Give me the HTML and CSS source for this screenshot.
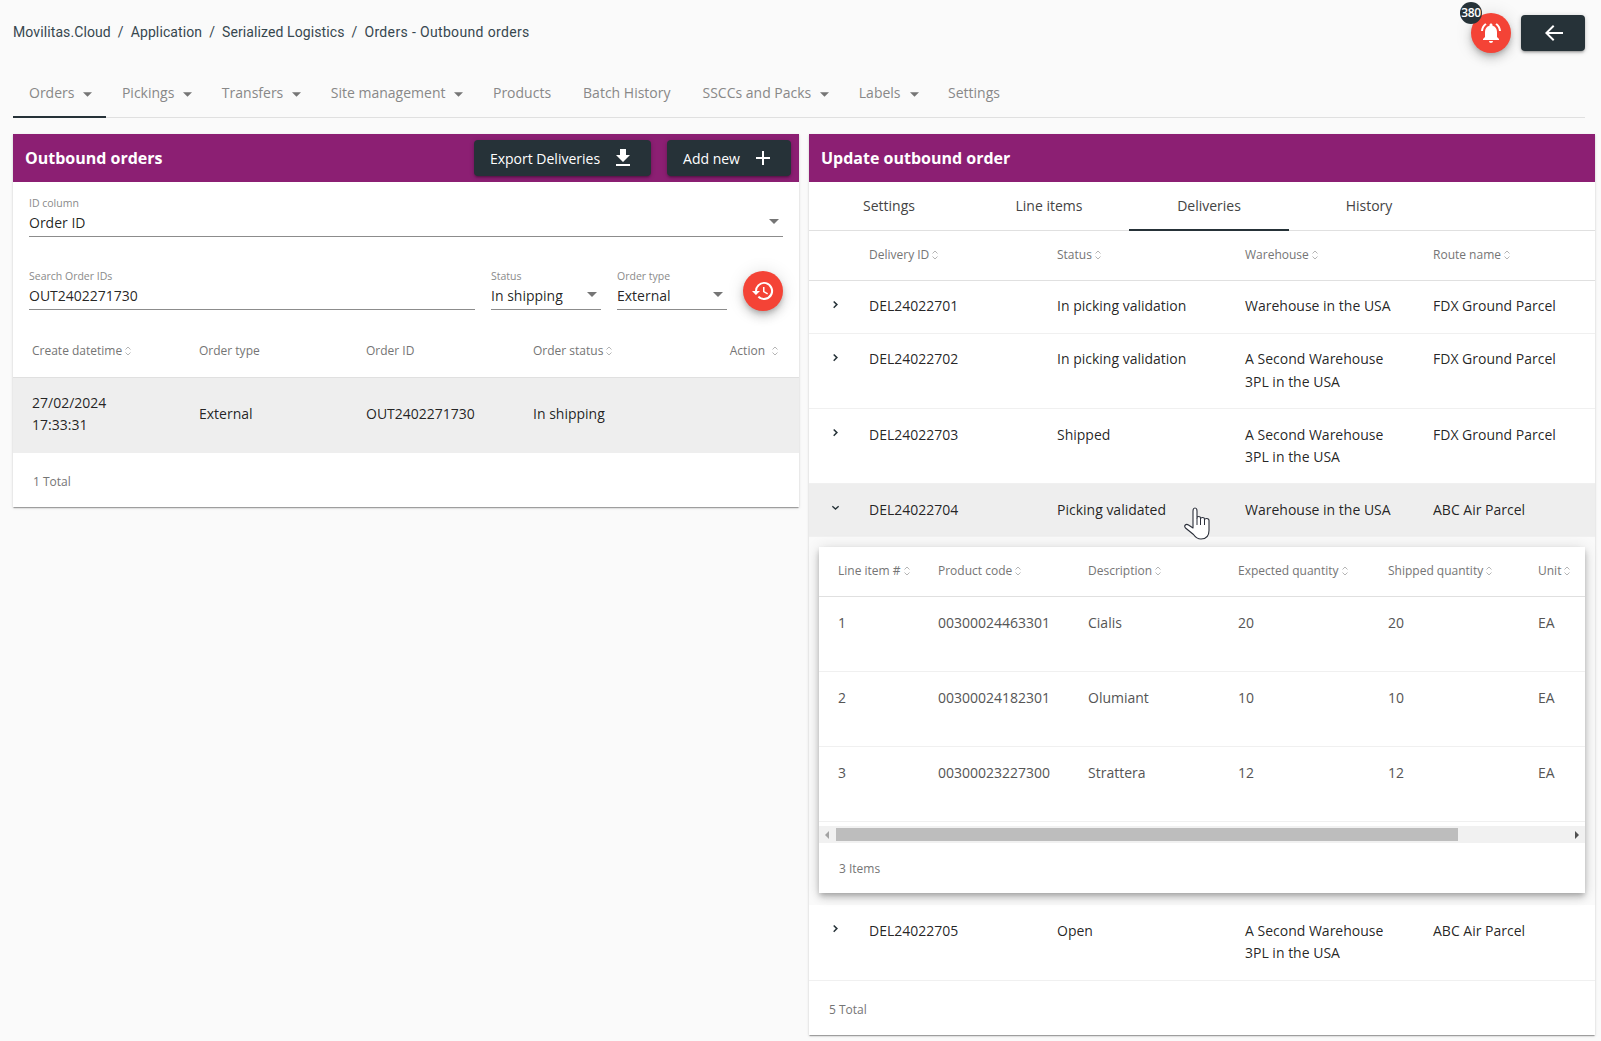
FILE: index.html
```html
<!DOCTYPE html>
<html lang="en">
<head>
    <meta charset="UTF-8">
    <title>Orders - Outbound orders</title>
    <link rel="stylesheet" href="styles.css">
</head>
<body>
    <svg class="defs" width="0" height="0">
        <symbol id="sort" viewBox="0 0 8 12">
            <path d="M1.5 4.5 4 2l2.5 2.5M1.5 7.5 4 10l2.5-2.5" fill="none" stroke="#b5b5b5" stroke-width="1"/>
        </symbol>
        <symbol id="caret" viewBox="0 0 10 5">
            <path d="M0 0h10L5 5z" fill="currentColor"/>
        </symbol>
        <symbol id="chev-right" viewBox="0 0 8 10">
            <path d="M2.2 1.5 5.4 4.6 2.2 7.7" fill="none" stroke="#263238" stroke-width="1.5"/>
        </symbol>
        <symbol id="chev-down" viewBox="0 0 10 8">
            <path d="M1.5 2 5 5.2 8.5 2" fill="none" stroke="#263238" stroke-width="1.5"/>
        </symbol>
    </svg>

    <!-- Top bar -->
    <header class="topbar">
        <nav class="breadcrumb">
            <a>Movilitas.Cloud</a><span>/</span><a>Application</a><span>/</span><a>Serialized Logistics</a><span>/</span><a class="crumb-current">Orders - Outbound orders</a>
        </nav>
        <div class="top-actions">
            <button class="fab fab-bell">
                <span class="badge">380</span>
                <svg width="24" height="24" viewBox="0 0 24 24" fill="#fff"><path d="M12 22c1.2 0 2-.9 2-2h-4c0 1.100.8 2 2 2zm6-6v-5c0-3.100-1.600-5.600-4.500-6.300V4c0-.8-.7-1.500-1.500-1.500s-1.500.7-1.500 1.500v.7C7.600 5.400 6 7.900 6 11v5l-2 2v1h16v-1l-2-2zM7.600 3.600 6.200 2.200C3.800 4 2.200 6.800 2 10h2c.2-2.700 1.500-5 3.600-6.400zM20 10h2c-.2-3.200-1.800-6-4.200-7.800l-1.400 1.400C18.500 5 19.800 7.300 20 10z"/></svg>
            </button>
            <button class="btn btn-back">
                <svg width="24" height="24" viewBox="0 0 24 24" fill="#fff"><path d="M22 11H7.800l5.600-5.600L12 4l-8 8 8 8 1.400-1.400L7.800 13H22z"/></svg>
            </button>
        </div>
    </header>

    <!-- Main tabs -->
    <nav class="main-tabs">
        <a class="main-tab active">Orders<svg class="tab-caret"><use href="#caret"/></svg></a>
        <a class="main-tab">Pickings<svg class="tab-caret"><use href="#caret"/></svg></a>
        <a class="main-tab">Transfers<svg class="tab-caret"><use href="#caret"/></svg></a>
        <a class="main-tab">Site management<svg class="tab-caret"><use href="#caret"/></svg></a>
        <a class="main-tab">Products</a>
        <a class="main-tab">Batch History</a>
        <a class="main-tab">SSCCs and Packs<svg class="tab-caret"><use href="#caret"/></svg></a>
        <a class="main-tab">Labels<svg class="tab-caret"><use href="#caret"/></svg></a>
        <a class="main-tab">Settings</a>
    </nav>

    <main class="panels">
        <!-- Outbound orders -->
        <section class="card">
            <div class="card-header">
                <h2>Outbound orders</h2>
                <div class="header-actions">
                    <button class="btn btn-export">Export Deliveries
                        <svg width="24" height="24" viewBox="0 0 24 24" fill="#fff"><path d="M19 9h-4V3H9v6H5l7 7 7-7zM5 18v2h14v-2H5z"/></svg>
                    </button>
                    <button class="btn btn-add">Add new
                        <svg width="24" height="24" viewBox="0 0 24 24" fill="#fff"><path d="M19 13h-6v6h-2v-6H5v-2h6V5h2v6h6v2z"/></svg>
                    </button>
                </div>
            </div>
            <div class="filters">
                <div class="field">
                    <label>ID column</label>
                    <div class="field-value">Order ID<svg class="select-caret"><use href="#caret"/></svg></div>
                </div>
                <div class="filter-row">
                    <div class="field field-grow">
                        <label>Search Order IDs</label>
                        <div class="field-value">OUT2402271730</div>
                    </div>
                    <div class="field field-small">
                        <label>Status</label>
                        <div class="field-value">In shipping<svg class="select-caret"><use href="#caret"/></svg></div>
                    </div>
                    <div class="field field-small">
                        <label>Order type</label>
                        <div class="field-value">External<svg class="select-caret"><use href="#caret"/></svg></div>
                    </div>
                    <button class="fab fab-reset">
                        <svg width="24" height="24" viewBox="0 0 24 24" fill="#fff"><path d="M13 3a9 9 0 0 0-9 9H1l3.900 3.900.1.100L9 12H6a7 7 0 1 1 2.100 4.900l-1.400 1.400A9 9 0 1 0 13 3zm-1 5v5l4.300 2.500.7-1.200-3.500-2.100V8H12z"/></svg>
                    </button>
                </div>
            </div>
            <table class="data-table orders-table">
                <thead>
                    <tr>
                        <th>Create datetime<svg class="sort"><use href="#sort"/></svg></th>
                        <th>Order type</th>
                        <th>Order ID</th>
                        <th>Order status<svg class="sort"><use href="#sort"/></svg></th>
                        <th class="col-action">Action<svg class="sort sort-wide"><use href="#sort"/></svg></th>
                    </tr>
                </thead>
                <tbody>
                    <tr class="selected">
                        <td>27/02/2024<br>17:33:31</td>
                        <td>External</td>
                        <td>OUT2402271730</td>
                        <td>In shipping</td>
                        <td></td>
                    </tr>
                </tbody>
            </table>
            <div class="table-total">1 Total</div>
        </section>

        <!-- Update outbound order -->
        <section class="card">
            <div class="card-header">
                <h2>Update outbound order</h2>
            </div>
            <div class="inner-tabs">
                <a class="inner-tab">Settings</a>
                <a class="inner-tab">Line items</a>
                <a class="inner-tab active">Deliveries</a>
                <a class="inner-tab">History</a>
            </div>
            <table class="data-table deliveries-table">
                <thead>
                    <tr>
                        <th class="col-chev"></th>
                        <th class="col-delivery">Delivery ID<svg class="sort"><use href="#sort"/></svg></th>
                        <th class="col-delivery">Status<svg class="sort"><use href="#sort"/></svg></th>
                        <th class="col-delivery">Warehouse<svg class="sort"><use href="#sort"/></svg></th>
                        <th>Route name<svg class="sort"><use href="#sort"/></svg></th>
                    </tr>
                </thead>
                <tbody>
                    <tr>
                        <td class="col-chev"><svg class="chev"><use href="#chev-right"/></svg></td>
                        <td>DEL24022701</td><td>In picking validation</td><td>Warehouse in the USA</td><td>FDX Ground Parcel</td>
                    </tr>
                    <tr>
                        <td class="col-chev"><svg class="chev"><use href="#chev-right"/></svg></td>
                        <td>DEL24022702</td><td>In picking validation</td><td>A Second Warehouse 3PL in the USA</td><td>FDX Ground Parcel</td>
                    </tr>
                    <tr>
                        <td class="col-chev"><svg class="chev"><use href="#chev-right"/></svg></td>
                        <td>DEL24022703</td><td>Shipped</td><td>A Second Warehouse 3PL in the USA</td><td>FDX Ground Parcel</td>
                    </tr>
                    <tr class="selected">
                        <td class="col-chev"><svg class="chev"><use href="#chev-down"/></svg></td>
                        <td>DEL24022704</td><td>Picking validated</td><td>Warehouse in the USA</td><td>ABC Air Parcel</td>
                    </tr>
                    <tr class="expanded-row">
                        <td colspan="5">
                            <div class="nested-card">
                                <div class="nested-scroll">
                                    <table class="data-table nested-table">
                                        <thead>
                                            <tr>
                                                <th class="col-first">Line item #<svg class="sort"><use href="#sort"/></svg></th>
                                                <th>Product code<svg class="sort"><use href="#sort"/></svg></th>
                                                <th>Description<svg class="sort"><use href="#sort"/></svg></th>
                                                <th>Expected quantity<svg class="sort"><use href="#sort"/></svg></th>
                                                <th>Shipped quantity<svg class="sort"><use href="#sort"/></svg></th>
                                                <th>Unit<svg class="sort"><use href="#sort"/></svg></th>
                                            </tr>
                                        </thead>
                                        <tbody>
                                            <tr><td>1</td><td>00300024463301</td><td>Cialis</td><td>20</td><td>20</td><td>EA</td></tr>
                                            <tr><td>2</td><td>00300024182301</td><td>Olumiant</td><td>10</td><td>10</td><td>EA</td></tr>
                                            <tr><td>3</td><td>00300023227300</td><td>Strattera</td><td>12</td><td>12</td><td>EA</td></tr>
                                        </tbody>
                                    </table>
                                </div>
                                <div class="scrollbar">
                                    <svg width="6" height="8" viewBox="0 0 6 8"><path d="M5 0v8L1 4z" fill="#a3a3a3"/></svg>
                                    <div class="scroll-track"><div class="scroll-thumb"></div></div>
                                    <svg width="6" height="8" viewBox="0 0 6 8"><path d="M1 0v8l4-4z" fill="#505050"/></svg>
                                </div>
                                <div class="table-total nested-total">3 Items</div>
                            </div>
                        </td>
                    </tr>
                    <tr>
                        <td class="col-chev"><svg class="chev"><use href="#chev-right"/></svg></td>
                        <td>DEL24022705</td><td>Open</td><td>A Second Warehouse 3PL in the USA</td><td>ABC Air Parcel</td>
                    </tr>
                </tbody>
            </table>
            <div class="table-total">5 Total</div>
        </section>
    </main>

    <!-- Mouse pointer caught in the screenshot -->
    <svg class="hand-cursor" width="28" height="34" viewBox="0 0 28 34">
        <path d="M10 4c0-4 4-4 4 0v7c0-2 3.500-2 3.500 0v1c0-2 4-2 4 0v1c0-2 4.500-2 4.500.5v10c0 5.500-3 8.500-8 8.500-3.500 0-5.500-1.500-7.500-4.500L2.500 21c-2-2.500.5-4.500 3-3l4.500 3z" fill="#fff" stroke="#2b2f3a" stroke-width="1.100" stroke-linejoin="round"/>
        <path d="M14 11v7M17.500 11.500v6.500M21.500 13v5" stroke="#2b2f3a" stroke-width="1" fill="none"/>
    </svg>
</body>
</html>
```

FILE: styles.css
```css
* {
    margin: 0;
    padding: 0;
    box-sizing: border-box;
}

body {
    font-family: "Open Sans", sans-serif;
    font-size: 14px;
    line-height: 22.4px;
    color: rgba(0, 0, 0, 0.87);
    background: #fafafa;
    height: 1041px;
    overflow: hidden;
    position: relative;
}

.defs {
    position: absolute;
}

button {
    font-family: inherit;
    border: 0;
    cursor: pointer;
}

/* Top bar */
.topbar {
    display: flex;
    justify-content: space-between;
    height: 64px;
    padding: 0 16px 0 13px;
}

.breadcrumb {
    font-family: Roboto, sans-serif;
    color: #37474f;
    padding-top: 21px;
    display: flex;
    gap: 7px;
    letter-spacing: 0.1px;
}

.crumb-current {
    letter-spacing: 0.35px;
}

.top-actions {
    display: flex;
    align-items: flex-start;
    gap: 10px;
    padding-top: 13px;
}

.fab {
    position: relative;
    width: 40px;
    height: 40px;
    border-radius: 50%;
    background: #f44336;
    display: flex;
    align-items: center;
    justify-content: center;
    flex-shrink: 0;
    box-shadow: 0 3px 5px -1px rgba(0, 0, 0, 0.2), 0 6px 10px 0 rgba(0, 0, 0, 0.14), 0 1px 18px 0 rgba(0, 0, 0, 0.12);
}

.badge {
    position: absolute;
    top: -11px;
    left: -11px;
    width: 22px;
    height: 22px;
    border-radius: 50%;
    background: #263238;
    color: #fff;
    font-size: 12px;
    font-weight: 600;
    line-height: 22px;
    text-align: center;
    letter-spacing: -0.3px;
}

.btn {
    background: #263238;
    color: #fff;
    height: 36px;
    border-radius: 4px;
    font-size: 14px;
    display: inline-flex;
    align-items: center;
    justify-content: center;
    box-shadow: 0 2px 2px 0 rgba(0, 0, 0, 0.14), 0 3px 1px -2px rgba(0, 0, 0, 0.12), 0 1px 5px 0 rgba(0, 0, 0, 0.2);
}

.btn-back {
    width: 64px;
    margin-top: 2px;
}

/* Main tabs */
.main-tabs {
    display: flex;
    height: 54px;
    margin: 0 16px 0 13px;
    border-bottom: 1px solid #e0e0e0;
}

.main-tab {
    height: 54px;
    padding: 6px 16px 0;
    display: flex;
    align-items: center;
    color: #888;
    white-space: nowrap;
    border-bottom: 2px solid transparent;
}

.main-tab.active {
    border-bottom-color: #263238;
}

.tab-caret {
    width: 9px;
    height: 5px;
    margin: 3px -2.5px 0 9px;
    color: #757575;
}

/* Panels */
.panels {
    display: flex;
    gap: 10px;
    padding: 16px 6px 0 13px;
    align-items: flex-start;
}

.card {
    width: 786px;
    flex-shrink: 0;
    background: #fff;
    box-shadow: 0 2px 1px -1px rgba(0, 0, 0, 0.2), 0 1px 1px 0 rgba(0, 0, 0, 0.14), 0 1px 3px 0 rgba(0, 0, 0, 0.12);
}

.card-header {
    background: #8c1f73;
    color: #fff;
    height: 48px;
    display: flex;
    align-items: center;
    justify-content: space-between;
    padding: 0 8px 0 12px;
}

.card-header h2 {
    font-size: 16px;
    font-weight: 700;
}

.header-actions {
    display: flex;
    gap: 16px;
}

.btn-export {
    width: 177px;
    gap: 11px;
}

.btn-add {
    width: 124px;
    gap: 11px;
}

/* Filters */
.filters {
    padding: 13px 16px 0;
}

.field label {
    display: block;
    font-size: 10.5px;
    line-height: 16px;
    color: #8a8a8a;
}

.field-value {
    position: relative;
    line-height: 22px;
    height: 26px;
    border-bottom: 1px solid #8c8c8c;
    padding-top: 1px;
}

.select-caret {
    position: absolute;
    right: 4px;
    top: 8px;
    width: 10px;
    height: 5px;
    color: #757575;
}

.filter-row {
    display: flex;
    gap: 16px;
    align-items: flex-start;
    margin-top: 31px;
}

.field-grow {
    flex: 1;
}

.field-small {
    width: 110px;
}

.fab-reset {
    margin-top: 3px;
}

/* Tables */
.data-table {
    width: 100%;
    border-collapse: collapse;
    table-layout: fixed;
}

.data-table th {
    font-size: 12px;
    font-weight: 400;
    color: #757575;
    text-align: left;
    height: 49px;
    padding: 0 0 0 20px;
    border-bottom: 1px solid #e0e0e0;
    white-space: nowrap;
}

.data-table td {
    padding: 14.6px 20px 15px;
    border-bottom: 1px solid #f0f0f0;
    vertical-align: top;
}

.sort {
    width: 8px;
    height: 12px;
    margin-left: 2px;
    vertical-align: -2px;
}

.orders-table {
    margin-top: 15px;
}

.orders-table th {
    height: 51px;
    padding-left: 19px;
}

.orders-table th:nth-child(-n+4) {
    width: 167px;
}

.orders-table td {
    height: 76px;
    padding-left: 19px;
    padding-top: 13px;
    vertical-align: middle;
    border-bottom: 0;
}

.orders-table .col-action {
    text-align: right;
    padding-right: 20px;
}

.sort-wide {
    margin-left: 6px;
}

.selected td {
    background: #eeeeee;
}

.table-total {
    font-size: 12px;
    color: #757575;
    height: 54px;
    padding: 18px 0 0 20px;
}

/* Inner tabs */
.inner-tabs {
    display: flex;
    height: 49px;
    border-bottom: 1px solid #e0e0e0;
}

.inner-tab {
    width: 160px;
    height: 49px;
    padding-top: 1px;
    display: flex;
    align-items: center;
    justify-content: center;
    color: #444;
    border-bottom: 2px solid transparent;
}

.inner-tab.active {
    border-bottom-color: #263238;
}

.deliveries-table .col-delivery {
    width: 188px;
}

.deliveries-table .col-chev {
    width: 40px;
    padding: 0;
    text-align: left;
}

.deliveries-table td.col-chev {
    padding: 19px 0 0 22px;
}

.chev {
    display: block;
    width: 9px;
    height: 10px;
}

.expanded-row > td {
    padding: 9.5px 10px 12px;
    background: #fafafa;
    border-bottom: 0;
}

.nested-card {
    background: #fff;
    box-shadow: 0 3px 5px -1px rgba(0, 0, 0, 0.2), 0 5px 8px 0 rgba(0, 0, 0, 0.14), 0 1px 14px 0 rgba(0, 0, 0, 0.12);
}

.nested-scroll {
    overflow: hidden;
}

.data-table.nested-table {
    width: 850px;
}

.nested-table th {
    width: 150px;
    height: 50px;
    padding-left: 19px;
}

.nested-table th.col-first {
    width: 100px;
}

.nested-table td {
    height: 75px;
    color: #555;
    padding-left: 19px;
    padding-right: 0;
}

.scrollbar {
    display: flex;
    align-items: center;
    justify-content: space-between;
    height: 17px;
    margin-top: 4px;
    padding: 0 5px;
    background: #f1f1f1;
}

.scroll-track {
    flex: 1;
    padding: 0 3px 0 6px;
}

.scroll-thumb {
    width: 622px;
    height: 13px;
    background: #bdbdbd;
}

.nested-total {
    height: 50px;
    padding-top: 15px;
}

/* Pointer */
.hand-cursor {
    position: absolute;
    left: 1183px;
    top: 507px;
}
```
